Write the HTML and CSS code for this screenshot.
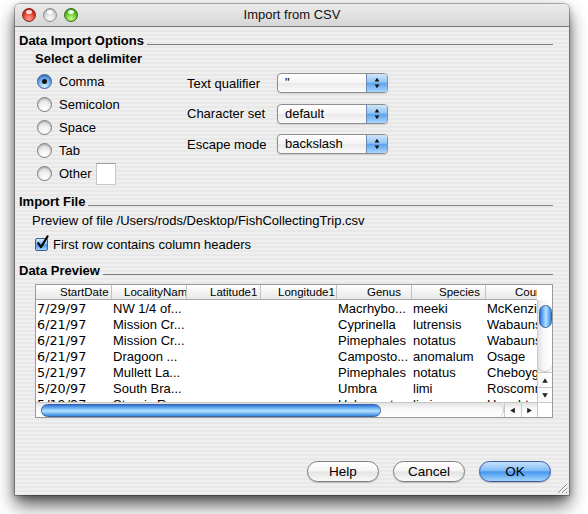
FILE: index.html
```html
<!DOCTYPE html>
<html>
<head>
<meta charset="utf-8">
<title>Import from CSV</title>
<link rel="stylesheet" href="styles.css">
</head>
<body>
<div class="window">
  <div class="titlebar">
    <div class="lights">
      <span class="light red"></span>
      <span class="light gray"></span>
      <span class="light green"></span>
    </div>
    <div class="title">Import from CSV</div>
    <div></div>
  </div>
  <div class="content">
    <div class="section-title first">Data Import Options</div>
    <div class="subhead">Select a delimiter</div>
    <div class="options">
      <div class="radios">
        <div class="radio-row"><span class="radio on"></span>Comma</div>
        <div class="radio-row"><span class="radio"></span>Semicolon</div>
        <div class="radio-row"><span class="radio"></span>Space</div>
        <div class="radio-row"><span class="radio"></span>Tab</div>
        <div class="radio-row"><span class="radio"></span>Other<span class="textfield"></span></div>
      </div>
      <div class="popups">
        <div class="popup-row"><span class="popup-label">Text qualifier</span><span class="popup"><span class="popup-value">"</span><span class="stepper"><svg width="21" height="18" viewBox="0 0 21 18"><path d="M10.5 3.5 L13 7.5 L8 7.5 Z" fill="#111"/><path d="M10.5 14.5 L13 10.5 L8 10.5 Z" fill="#111"/></svg></span></span></div>
        <div class="popup-row"><span class="popup-label">Character set</span><span class="popup"><span class="popup-value">default</span><span class="stepper"><svg width="21" height="18" viewBox="0 0 21 18"><path d="M10.5 3.5 L13 7.5 L8 7.5 Z" fill="#111"/><path d="M10.5 14.5 L13 10.5 L8 10.5 Z" fill="#111"/></svg></span></span></div>
        <div class="popup-row"><span class="popup-label">Escape mode</span><span class="popup"><span class="popup-value">backslash</span><span class="stepper"><svg width="21" height="18" viewBox="0 0 21 18"><path d="M10.5 3.5 L13 7.5 L8 7.5 Z" fill="#111"/><path d="M10.5 14.5 L13 10.5 L8 10.5 Z" fill="#111"/></svg></span></span></div>
      </div>
    </div>
    <div class="section-title import">Import File</div>
    <div class="file-path">Preview of file /Users/rods/Desktop/FishCollectingTrip.csv</div>
    <div class="check-row"><span class="checkbox"><svg width="15" height="16" viewBox="0 0 15 16"><path d="M3.2 8.2 L6 12 L12.5 1.5" fill="none" stroke="#000" stroke-width="2.2" stroke-linecap="round" stroke-linejoin="round"/></svg></span>First row contains column headers</div>
    <div class="section-title preview">Data Preview</div>
    <div class="scrollview">
      <div class="thead">
        <div class="th h1">StartDate</div>
        <div class="th h2">LocalityName</div>
        <div class="th h3">Latitude1</div>
        <div class="th h4">Longitude1</div>
        <div class="th h5">Genus</div>
        <div class="th h6">Species</div>
        <div class="th h7">County</div>
      </div>
      <div class="corner-top"></div>
      <div class="tbody">
        <div class="tr"><span class="date">7/29/97</span><span>NW 1/4 of...</span><span></span><span></span><span>Macrhybo...</span><span>meeki</span><span>McKenzie</span></div>
        <div class="tr"><span class="date">6/21/97</span><span>Mission Cr...</span><span></span><span></span><span>Cyprinella</span><span>lutrensis</span><span>Wabaunsee</span></div>
        <div class="tr"><span class="date">6/21/97</span><span>Mission Cr...</span><span></span><span></span><span>Pimephales</span><span>notatus</span><span>Wabaunsee</span></div>
        <div class="tr"><span class="date">6/21/97</span><span>Dragoon ...</span><span></span><span></span><span>Camposto...</span><span>anomalum</span><span>Osage</span></div>
        <div class="tr"><span class="date">5/21/97</span><span>Mullett La...</span><span></span><span></span><span>Pimephales</span><span>notatus</span><span>Cheboygan</span></div>
        <div class="tr"><span class="date">5/20/97</span><span>South Bra...</span><span></span><span></span><span>Umbra</span><span>limi</span><span>Roscommon</span></div>
        <div class="tr"><span class="date">5/19/97</span><span>Sturgis R...</span><span></span><span></span><span>Hybognat...</span><span>limi</span><span>Houghton</span></div>
      </div>
      <div class="vscroll">
        <div class="vtrack"><span class="vthumb"></span></div>
        <div class="varrow up"><svg width="15" height="15" viewBox="0 0 15 15"><path d="M7.5 5 L10.5 10 L4.5 10 Z" fill="#222"/></svg></div>
        <div class="varrow down"><svg width="15" height="15" viewBox="0 0 15 15"><path d="M7.5 10 L10.5 5 L4.5 5 Z" fill="#222"/></svg></div>
      </div>
      <div class="hscroll">
        <div class="htrack"><span class="hthumb"></span></div>
        <div class="harrow"><svg width="17" height="15" viewBox="0 0 17 15"><path d="M5.5 7.5 L10.5 4.5 L10.5 10.5 Z" fill="#222"/></svg></div>
        <div class="harrow"><svg width="16" height="15" viewBox="0 0 16 15"><path d="M10.5 7.5 L5.5 4.5 L5.5 10.5 Z" fill="#222"/></svg></div>
      </div>
      <div class="corner-bottom"></div>
    </div>
    <div class="buttons">
      <span class="button">Help</span>
      <span class="button">Cancel</span>
      <span class="button default">OK</span>
    </div>
  </div>
  <div class="grip"><svg width="13" height="13" viewBox="0 0 13 13"><path d="M12 3 L3 12 M12 7 L7 12 M12 11 L11 12" stroke="#8a8a8a" stroke-width="1"/><path d="M12 4 L4 12 M12 8 L8 12" stroke="#fff" stroke-width="1"/></svg></div>
</div>
</body>
</html>
```

FILE: styles.css
```css
* { box-sizing: border-box; }
html, body { margin: 0; padding: 0; background: #fff; }
body {
  width: 588px;
  height: 514px;
  overflow: hidden;
  font-family: "Liberation Sans", Arial, sans-serif;
  font-size: 13px;
  color: #000;
}

.window {
  position: relative;
  margin: 4px 0 0 15px;
  width: 554px;
  height: 491px;
  border-radius: 5px 5px 0 0;
  background: repeating-linear-gradient(#efefef 0 2px, #e8e8e8 2px 4px);
  box-shadow: 0 0 0 1px rgba(0,0,0,0.25), 0 10px 18px rgba(0,0,0,0.65), 0 2px 7px rgba(0,0,0,0.3);
  display: flex;
  flex-direction: column;
}

/* title bar */
.titlebar {
  height: 23px;
  flex: none;
  border-bottom: 1px solid #7b7b7b;
  border-radius: 5px 5px 0 0;
  background: linear-gradient(#ebebeb, #d6d6d6);
  display: grid;
  grid-template-columns: 1fr auto 1fr;
  align-items: center;
}
.lights { display: flex; gap: 7px; padding-left: 7px; }
.light {
  width: 14px;
  height: 14px;
  border-radius: 50%;
  position: relative;
}
.light::after {
  content: "";
  position: absolute;
  left: 3px; top: 1px;
  width: 6px; height: 4px;
  border-radius: 50%;
  background: rgba(255,255,255,0.85);
}
.red {
  background: radial-gradient(circle at 50% 80%, #ff9e8f 0, #e0382a 55%, #9c160b 100%);
  border: 1px solid #86291f;
}
.gray {
  background: radial-gradient(circle at 50% 80%, #ffffff 0, #d5d5d5 55%, #9d9d9d 100%);
  border: 1px solid #8f8f8f;
}
.green {
  background: radial-gradient(circle at 50% 80%, #c7ff8a 0, #5fbf23 55%, #2d7a0c 100%);
  border: 1px solid #3a6e1c;
}
.title { font-size: 13px; color: #111; line-height: 16px; }

/* content */
.content {
  flex: 1;
  padding: 0 16px 0 4px;
  display: flex;
  flex-direction: column;
}
.section-title {
  display: flex;
  font-weight: bold;
  line-height: 16px;
  white-space: nowrap;
}
.section-title::after {
  content: "";
  flex: 1;
  height: 1px;
  background: #7f7f7f;
  align-self: flex-end;
  margin: 0 0 4px 3px;
}
.section-title.first { margin-top: 6px; }
.section-title.import { margin-top: 9px; }
.section-title.preview { margin-top: 11px; }
.subhead {
  font-weight: bold;
  line-height: 16px;
  padding-left: 16px;
  margin-top: 2px;
}

.options {
  display: grid;
  grid-template-columns: 168px 1fr;
  margin-top: 3px;
}
.radios { padding-left: 16px; }
.radio-row {
  display: flex;
  align-items: center;
  height: 23px;
}
.radio {
  width: 15px;
  height: 15px;
  border-radius: 50%;
  margin: 0 7px 0 2px;
  border: 1px solid #7c7c7c;
  background: radial-gradient(circle at 50% 85%, #ffffff 0, #f0f0f0 45%, #c4c4c4 100%);
  box-shadow: inset 0 1px 1px rgba(0,0,0,0.18);
  position: relative;
}
.radio.on {
  border-color: #3d5f94;
  background: radial-gradient(circle at 50% 85%, #d4f1ff 0, #6fb3f0 50%, #2e6fc9 100%);
}
.radio.on::after {
  content: "";
  position: absolute;
  left: 4px; top: 4px;
  width: 5px; height: 5px;
  border-radius: 50%;
  background: #111;
}
.textfield {
  width: 20px;
  height: 22px;
  margin-left: 4px;
  background: #fff;
  border: 1px solid #c6c6c6;
  border-top-color: #9e9e9e;
}

.popups {
  display: flex;
  flex-direction: column;
  gap: 10.5px;
  padding-top: 3px;
}
.popup-row {
  display: flex;
  align-items: center;
  height: 20px;
}
.popup-label { width: 90px; }
.popup {
  width: 111px;
  height: 20px;
  display: flex;
  border: 1px solid #8d8d8d;
  border-radius: 4px;
  background: linear-gradient(#ffffff, #f4f4f4 50%, #e9e9e9 51%, #fbfbfb);
  box-shadow: 0 1px 1px rgba(0,0,0,0.12);
  overflow: hidden;
}
.popup-value {
  flex: 1;
  padding-left: 7px;
  line-height: 18px;
}
.stepper {
  width: 21px;
  flex: none;
  border-left: 1px solid #6a88b6;
  background: linear-gradient(#cfe6fb, #94c5f4 45%, #5ea3ec 52%, #a9d6ff);
  display: flex;
}

.file-path {
  padding-left: 13px;
  margin-top: 3px;
  line-height: 16px;
  white-space: nowrap;
}
.check-row {
  display: flex;
  align-items: center;
  height: 16px;
  margin-top: 7px;
  padding-left: 16px;
}
.checkbox {
  width: 13px;
  height: 13px;
  margin-right: 5px;
  border: 1px solid #3d5f94;
  border-radius: 2px;
  background: linear-gradient(#d4ecff, #7ab8f2 45%, #4590e3 55%, #a8dcff);
  position: relative;
}
.checkbox svg { position: absolute; left: -1px; top: -4px; }

/* table */
.scrollview {
  margin: 5px 0 0 16px;
  height: 134px;
  border: 1px solid #9a9a9a;
  background: #fff;
  display: grid;
  grid-template-columns: 1fr 15px;
  grid-template-rows: 15px 1fr 15px;
  overflow: hidden;
}
.thead {
  display: grid;
  grid-template-columns: 76px 75px 74px 76px 75px 74px 75px;
  overflow: hidden;
  background: linear-gradient(#ffffff, #f3f3f3 50%, #e9e9e9);
  border-bottom: 1px solid #a9a9a9;
  font-size: 11.5px;
  line-height: 14px;
}
.th {
  border-right: 1px solid #c2c2c2;
  white-space: nowrap;
  overflow: hidden;
}
.h1 { padding-left: 24px; }
.h2 { padding-left: 12px; }
.h3 { padding-left: 23px; }
.h4 { padding-left: 17px; }
.h5 { padding-left: 30px; }
.h6 { padding-left: 27px; }
.h7 { padding-left: 29px; border-right: 0; }
.corner-top { background: #fff; }
.tbody {
  overflow: hidden;
  grid-column: 1;
  grid-row: 2;
}
.tr {
  display: grid;
  grid-template-columns: 76px 75px 74px 76px 75px 74px 75px;
  height: 16px;
  line-height: 17px;
}
.tr span {
  padding-left: 1px;
  white-space: nowrap;
  overflow: hidden;
}
.tr .date { font-family: "DejaVu Sans", sans-serif; font-size: 12.8px; }

.vscroll {
  grid-column: 2;
  grid-row: 2;
  display: flex;
  flex-direction: column;
  border-left: 1px solid #c8c8c8;
  background: linear-gradient(to right, #e2e2e2, #f8f8f8 40%, #ffffff);
}
.vtrack {
  flex: 1;
  padding: 5px 0 0 0;
  display: flex;
  justify-content: center;
  border-bottom: 1px solid #c8c8c8;
  border-radius: 0 0 7px 7px;
}
.vthumb {
  width: 13px;
  height: 23px;
  border-radius: 7px;
  border: 1px solid #3c62a3;
  background: linear-gradient(to right, #2d73d6, #7ec0f7 35%, #b8e2ff 55%, #6ab2f3 80%, #3a84df);
}
.varrow {
  height: 15px;
  border-top: 1px solid #c8c8c8;
  background: linear-gradient(to right, #f6f6f6, #ffffff);
  display: flex;
}
.hscroll {
  grid-column: 1;
  grid-row: 3;
  display: flex;
  border-top: 1px solid #c8c8c8;
  background: linear-gradient(#e2e2e2, #f8f8f8 40%, #ffffff);
}
.htrack {
  flex: 1;
  padding: 0 0 0 5px;
  display: flex;
  align-items: center;
  border-right: 1px solid #c8c8c8;
  border-radius: 0 7px 7px 0;
}
.hthumb {
  width: 340px;
  height: 13px;
  border-radius: 7px;
  border: 1px solid #3c62a3;
  background: linear-gradient(#2d73d6, #7ec0f7 35%, #b8e2ff 55%, #6ab2f3 80%, #3a84df);
}
.harrow {
  width: 17px;
  display: flex;
  border-left: 1px solid #c8c8c8;
}
.harrow:last-child { width: 16px; }
.corner-bottom { background: #fff; border-left: 1px solid #c8c8c8; border-top: 1px solid #c8c8c8; }

/* buttons */
.buttons {
  display: flex;
  justify-content: flex-end;
  gap: 14px;
  margin: 43px 2px 0 0;
}
.button {
  width: 72px;
  height: 21px;
  border-radius: 11px;
  border: 1px solid #7e7e7e;
  background: linear-gradient(#ffffff, #f5f5f5 48%, #e3e3e3 52%, #fafafa);
  box-shadow: 0 1px 1px rgba(0,0,0,0.2);
  text-align: center;
  line-height: 19px;
  font-size: 13.5px;
}
.button.default {
  border-color: #3a58a0;
  background: linear-gradient(#c6e3fd, #80bcf5 45%, #4596ec 52%, #a4d6ff);
}

.grip {
  position: absolute;
  right: 1px;
  bottom: 1px;
  width: 13px;
  height: 13px;
}
```
